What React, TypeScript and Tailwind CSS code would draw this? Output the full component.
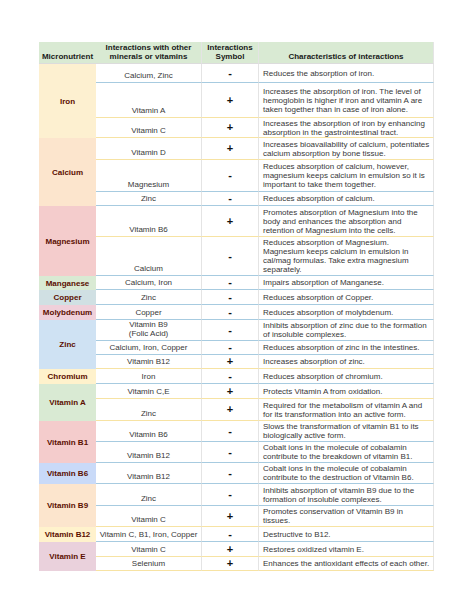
type Row = {
  other: string[];
  sym: "+" | "-";
  desc: string[];
  h: string;
  line: "blue" | "yellow";
};

type Group = {
  name: string;
  bg: string;
  span: string;
  rows: Row[];
};

const lineColor = {
  blue: "border-b-[#a7cbe0]",
  yellow: "border-b-[#f7e3a3]",
};

const groups: Group[] = [
  {
    name: "Iron",
    bg: "bg-[#fdf0d0]",
    span: "row-span-3",
    rows: [
      { other: ["Calcium, Zinc"], sym: "-", desc: ["Reduces the absorption of iron."], h: "h-[19px]", line: "blue" },
      {
        other: ["Vitamin A"],
        sym: "+",
        desc: [
          "Increases the absorption of iron. The level of",
          "hemoglobin is higher if iron and vitamin A are",
          "taken together than in case of iron alone.",
        ],
        h: "h-[35px]",
        line: "yellow",
      },
      {
        other: ["Vitamin C"],
        sym: "+",
        desc: ["Increases the absorption of iron by enhancing", "absorption in the gastrointestinal tract."],
        h: "h-[20px]",
        line: "yellow",
      },
    ],
  },
  {
    name: "Calcium",
    bg: "bg-[#fce5cd]",
    span: "row-span-3",
    rows: [
      {
        other: ["Vitamin D"],
        sym: "+",
        desc: ["Increases bioavailability of calcium, potentiates", "calcium absorption by bone tissue."],
        h: "h-[22px]",
        line: "yellow",
      },
      {
        other: ["Magnesium"],
        sym: "-",
        desc: [
          "Reduces absorption of calcium, however,",
          "magnesium keeps calcium in emulsion so it is",
          "important to take them together.",
        ],
        h: "h-[32px]",
        line: "blue",
      },
      { other: ["Zinc"], sym: "-", desc: ["Reduces absorption of calcium."], h: "h-[14px]", line: "blue" },
    ],
  },
  {
    name: "Magnesium",
    bg: "bg-[#f4cccc]",
    span: "row-span-2",
    rows: [
      {
        other: ["Vitamin B6"],
        sym: "+",
        desc: [
          "Promotes absorption of Magnesium into the",
          "body and enhances the absorption and",
          "retention of Magnesium into the cells.",
        ],
        h: "h-[31px]",
        line: "yellow",
      },
      {
        other: ["Calcium"],
        sym: "-",
        desc: [
          "Reduces absorption of Magnesium.",
          "Magnesium keeps calcium in emulsion in",
          "cal/mag formulas. Take extra magnesium",
          "separately.",
        ],
        h: "h-[39px]",
        line: "blue",
      },
    ],
  },
  {
    name: "Manganese",
    bg: "bg-[#d9ead3]",
    span: "row-span-1",
    rows: [{ other: ["Calcium, Iron"], sym: "-", desc: ["Impairs absorption of Manganese."], h: "h-[14px]", line: "blue" }],
  },
  {
    name: "Copper",
    bg: "bg-[#d0e0e3]",
    span: "row-span-1",
    rows: [{ other: ["Zinc"], sym: "-", desc: ["Reduces absorption of Copper."], h: "h-[15px]", line: "blue" }],
  },
  {
    name: "Molybdenum",
    bg: "bg-[#efd0da]",
    span: "row-span-1",
    rows: [{ other: ["Copper"], sym: "-", desc: ["Reduces absorption of molybdenum."], h: "h-[15px]", line: "blue" }],
  },
  {
    name: "Zinc",
    bg: "bg-[#cfe2f3]",
    span: "row-span-3",
    rows: [
      {
        other: ["Vitamin B9", "(Folic Acid)"],
        sym: "-",
        desc: ["Inhibits absorption of zinc due to the formation", "of insoluble complexes."],
        h: "h-[21px]",
        line: "blue",
      },
      {
        other: ["Calcium, Iron, Copper"],
        sym: "-",
        desc: ["Reduces absorption of zinc in the intestines."],
        h: "h-[14px]",
        line: "blue",
      },
      { other: ["Vitamin B12"], sym: "+", desc: ["Increases absorption of zinc."], h: "h-[14px]", line: "yellow" },
    ],
  },
  {
    name: "Chromium",
    bg: "bg-[#fff2cc]",
    span: "row-span-1",
    rows: [{ other: ["Iron"], sym: "-", desc: ["Reduces absorption of chromium."], h: "h-[15px]", line: "blue" }],
  },
  {
    name: "Vitamin A",
    bg: "bg-[#d9ead3]",
    span: "row-span-2",
    rows: [
      { other: ["Vitamin C,E"], sym: "+", desc: ["Protects Vitamin A from oxidation."], h: "h-[15px]", line: "yellow" },
      {
        other: ["Zinc"],
        sym: "+",
        desc: ["Required for the metabolism of vitamin A and", "for its transformation into an active form."],
        h: "h-[22px]",
        line: "yellow",
      },
    ],
  },
  {
    name: "Vitamin B1",
    bg: "bg-[#f4cccc]",
    span: "row-span-2",
    rows: [
      {
        other: ["Vitamin B6"],
        sym: "-",
        desc: ["Slows the transformation of vitamin B1 to its", "biologically active form."],
        h: "h-[21px]",
        line: "blue",
      },
      {
        other: ["Vitamin B12"],
        sym: "-",
        desc: ["Cobalt ions in the molecule of cobalamin", "contribute to the breakdown of vitamin B1."],
        h: "h-[21px]",
        line: "blue",
      },
    ],
  },
  {
    name: "Vitamin B6",
    bg: "bg-[#c9daf8]",
    span: "row-span-1",
    rows: [
      {
        other: ["Vitamin B12"],
        sym: "-",
        desc: ["Cobalt ions in the molecule of cobalamin", "contribute to the destruction of Vitamin B6."],
        h: "h-[21px]",
        line: "blue",
      },
    ],
  },
  {
    name: "Vitamin B9",
    bg: "bg-[#fce5cd]",
    span: "row-span-2",
    rows: [
      {
        other: ["Zinc"],
        sym: "-",
        desc: ["Inhibits absorption of vitamin B9 due to the", "formation of insoluble complexes."],
        h: "h-[22px]",
        line: "blue",
      },
      {
        other: ["Vitamin C"],
        sym: "+",
        desc: ["Promotes conservation of Vitamin B9 in", "tissues."],
        h: "h-[21px]",
        line: "yellow",
      },
    ],
  },
  {
    name: "Vitamin B12",
    bg: "bg-[#fff2cc]",
    span: "row-span-1",
    rows: [
      { other: ["Vitamin C, B1, Iron, Copper"], sym: "-", desc: ["Destructive to B12."], h: "h-[15px]", line: "blue" },
    ],
  },
  {
    name: "Vitamin E",
    bg: "bg-[#ead1dc]",
    span: "row-span-2",
    rows: [
      { other: ["Vitamin C"], sym: "+", desc: ["Restores oxidized vitamin E."], h: "h-[15px]", line: "yellow" },
      {
        other: ["Selenium"],
        sym: "+",
        desc: ["Enhances the antioxidant effects of each other."],
        h: "h-[14px]",
        line: "yellow",
      },
    ],
  },
];

function Lines({ items }: { items: string[] }) {
  return (
    <div>
      {items.map((t) => (
        <div key={t} className="whitespace-nowrap">
          {t}
        </div>
      ))}
    </div>
  );
}

export default function App() {
  return (
    <div className="min-h-[613px] bg-white pt-[42px] pl-[39px] font-['Liberation_Sans',Arial,sans-serif] text-[8px] leading-[9px] text-[#383838]">
      <div className="grid w-[395px] grid-cols-[57px_106px_57px_175px]">
        {/* header */}
        <div className="flex h-[22px] items-end justify-center bg-[#d9ead3] pb-[2px] font-bold text-[#1a1a1a] border-b border-b-[#dcdcdc]">
          Micronutrient
        </div>
        <div className="flex h-[22px] items-end justify-center bg-[#d9ead3] pb-[2px] text-center font-bold text-[#1a1a1a] border-b border-b-[#dcdcdc] border-r border-r-[#e4e4e4]">
          <Lines items={["Interactions with other", "minerals or vitamins"]} />
        </div>
        <div className="flex h-[22px] items-end justify-center bg-[#d9ead3] pb-[2px] text-center font-bold text-[#1a1a1a] border-b border-b-[#dcdcdc] border-r border-r-[#e4e4e4]">
          <Lines items={["Interactions", "Symbol"]} />
        </div>
        <div className="flex h-[22px] items-end justify-center bg-[#d9ead3] pb-[2px] font-bold text-[#1a1a1a] border-b border-b-[#dcdcdc] border-r border-r-[#e4e4e4]">
          Characteristics of interactions
        </div>

        {groups.map((g) => (
          <Group key={g.name} g={g} />
        ))}
      </div>
    </div>
  );
}

function Group({ g }: { g: Group }) {
  return (
    <>
      <div className={`col-start-1 flex items-center justify-center font-bold text-[#5b0f00] ${g.span} ${g.bg}`}>
        {g.name}
      </div>
      {g.rows.map((r, i) => (
        <RowCells key={i} r={r} />
      ))}
    </>
  );
}

function RowCells({ r }: { r: Row }) {
  const line = lineColor[r.line];
  return (
    <>
      <div className={`flex items-end justify-center pb-[2px] text-center border-b border-r border-r-[#e4e4e4] ${line} ${r.h}`}>
        <Lines items={r.other} />
      </div>
      <div className={`flex items-center justify-center text-[11px] font-bold text-[#111] border-b border-r border-r-[#e4e4e4] ${line} ${r.h}`}>
        {r.sym === "-" ? "-" : "+"}
      </div>
      <div className={`flex items-center pl-1 border-b border-r border-r-[#e4e4e4] ${line} ${r.h}`}>
        <Lines items={r.desc} />
      </div>
    </>
  );
}
